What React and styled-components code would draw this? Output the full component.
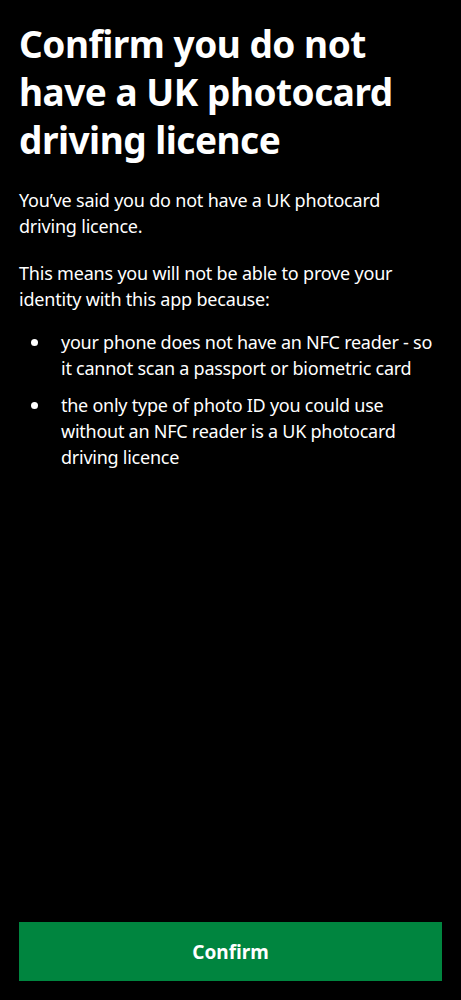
import React from "react";
import styled, { createGlobalStyle } from "styled-components";

const Global = createGlobalStyle`
  html, body { margin: 0; padding: 0; background: #000; }
  body { font-family: "Noto Sans", "Liberation Sans", sans-serif; color: #fff; }
`;

const Screen = styled.div`
  box-sizing: border-box;
  width: 461px;
  height: 1000px;
  background: #000;
  display: flex;
  flex-direction: column;
  padding: 20px 19px 19px 19px;
`;

const Content = styled.div`
  flex: 1;
`;

const Title = styled.h1`
  margin: 0 0 23px 0;
  font-size: 37px;
  line-height: 48px;
  font-weight: 700;
  letter-spacing: -0.5px;
`;

const Para = styled.p`
  margin: 0 0 21px 0;
  font-size: 18px;
  line-height: 26px;
  letter-spacing: -0.2px;
  &:last-of-type { margin-bottom: 17px; }
`;

const List = styled.ul`
  margin: 0;
  padding: 0;
  list-style: none;
  display: flex;
  flex-direction: column;
  gap: 11px;
`;

const Item = styled.li`
  position: relative;
  padding-left: 42px;
  font-size: 18px;
  line-height: 26px;
  letter-spacing: -0.25px;
  &::before {
    content: "";
    position: absolute;
    left: 12px;
    top: 10px;
    width: 7px;
    height: 7px;
    border-radius: 50%;
    background: #fff;
  }
`;

const Button = styled.button`
  height: 59px;
  width: 100%;
  border: 0;
  background: #00853f;
  color: #fff;
  font-family: inherit;
  font-size: 19px;
  font-weight: 700;
`;

export default function App() {
  return (
    <>
      <Global />
      <Screen>
        <Content>
          <Title>Confirm you do not have a UK photocard driving licence</Title>
          <Para>You’ve said you do not have a UK photocard driving licence.</Para>
          <Para>This means you will not be able to prove your identity with this app because:</Para>
          <List>
            <Item>your phone does not have an NFC reader - so it cannot scan a passport or biometric card</Item>
            <Item>the only type of photo ID you could use without an NFC reader is a UK photocard driving licence</Item>
          </List>
        </Content>
        <Button>Confirm</Button>
      </Screen>
    </>
  );
}
